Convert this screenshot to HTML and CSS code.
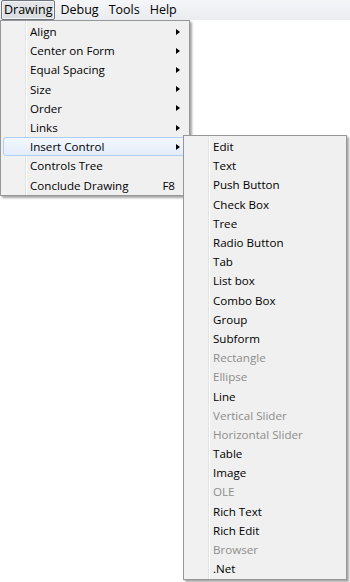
FILE: index.html
```html
<!DOCTYPE html>
<html>
<head>
<meta charset="utf-8">
<link rel="stylesheet" href="styles.css">
</head>
<body>
<div class="menubar">
  <span class="mb-item active">Drawing</span>
  <span class="mb-item">Debug</span>
  <span class="mb-item">Tools</span>
  <span class="mb-item">Help</span>
</div>
<div class="page"></div>

<div class="menu main-menu">
  <div class="row"><span class="label">Align</span><span class="arrow"></span></div>
  <div class="row"><span class="label">Center on Form</span><span class="arrow"></span></div>
  <div class="row"><span class="label">Equal Spacing</span><span class="arrow"></span></div>
  <div class="row"><span class="label">Size</span><span class="arrow"></span></div>
  <div class="row"><span class="label">Order</span><span class="arrow"></span></div>
  <div class="row"><span class="label">Links</span><span class="arrow"></span></div>
  <div class="row hot"><span class="label">Insert Control</span><span class="arrow"></span></div>
  <div class="row"><span class="label">Controls Tree</span></div>
  <div class="row"><span class="label">Conclude Drawing</span><span class="key">F8</span></div>
</div>

<div class="menu sub-menu">
  <div class="row"><span class="label">Edit</span></div>
  <div class="row"><span class="label">Text</span></div>
  <div class="row"><span class="label">Push Button</span></div>
  <div class="row"><span class="label">Check Box</span></div>
  <div class="row"><span class="label">Tree</span></div>
  <div class="row"><span class="label">Radio Button</span></div>
  <div class="row"><span class="label">Tab</span></div>
  <div class="row"><span class="label">List box</span></div>
  <div class="row"><span class="label">Combo Box</span></div>
  <div class="row"><span class="label">Group</span></div>
  <div class="row"><span class="label">Subform</span></div>
  <div class="row disabled"><span class="label">Rectangle</span></div>
  <div class="row disabled"><span class="label">Ellipse</span></div>
  <div class="row"><span class="label">Line</span></div>
  <div class="row disabled"><span class="label">Vertical Slider</span></div>
  <div class="row disabled"><span class="label">Horizontal Slider</span></div>
  <div class="row"><span class="label">Table</span></div>
  <div class="row"><span class="label">Image</span></div>
  <div class="row disabled"><span class="label">OLE</span></div>
  <div class="row"><span class="label">Rich Text</span></div>
  <div class="row"><span class="label">Rich Edit</span></div>
  <div class="row disabled"><span class="label">Browser</span></div>
  <div class="row"><span class="label">.Net</span></div>
</div>
</body>
</html>
```

FILE: styles.css
```css
html, body {
  margin: 0;
  padding: 0;
  background: #ffffff;
  font-family: "Open Sans", "Noto Sans", "Liberation Sans", sans-serif;
  font-size: 11.6px;
  color: #000;
  width: 350px;
  height: 582px;
  overflow: hidden;
}

.menubar {
  display: flex;
  align-items: center;
  height: 20px;
  padding-left: 1px;
  background: linear-gradient(#f5f6f8, #e9ecf0);
  box-sizing: border-box;
}

.mb-item {
  font-size: 12.5px;
  line-height: 16px;
  padding: 1px 4px;
  border: 1px solid transparent;
  border-radius: 2px;
}

.mb-item.active {
  padding: 1px 2px;
  border-color: #6f7680;
  background: linear-gradient(#e4e6e9, #dadde1);
  box-shadow: inset 0 0 0 1px #f3f4f6;
}

.menu {
  position: absolute;
  box-sizing: border-box;
  border: 1px solid #979797;
  padding: 1px 2px;
  background:
    linear-gradient(to right,
      #f1f1f1 0, #f1f1f1 24px,
      #e2e3e3 24px, #e2e3e3 25px,
      #ffffff 25px, #ffffff 26px,
      #f0f0f0 26px);
  box-shadow: 2px 2px 2px rgba(0, 0, 0, 0.35);
}

.main-menu {
  left: 0;
  top: 20px;
  width: 190px;
  height: 176px;
}

.sub-menu {
  left: 183px;
  top: 135px;
  width: 164px;
  height: 445px;
}

.row {
  display: flex;
  align-items: center;
  height: 19.2px;
  box-sizing: border-box;
  padding-left: 27px;
  border: 1px solid transparent;
  border-radius: 3px;
}

.row .label {
  flex: 1;
  margin-left: -1px;
  white-space: nowrap;
}

.row.disabled {
  color: #8d8d8d;
}

.row.hot {
  border-color: #aecff7;
  background: linear-gradient(#f2f7fd, #e3edfa);
}

.arrow {
  width: 0;
  height: 0;
  border-top: 3.5px solid transparent;
  border-bottom: 3.5px solid transparent;
  border-left: 4px solid #000;
  margin-right: 6px;
}

.key {
  margin-right: 11px;
}
```
